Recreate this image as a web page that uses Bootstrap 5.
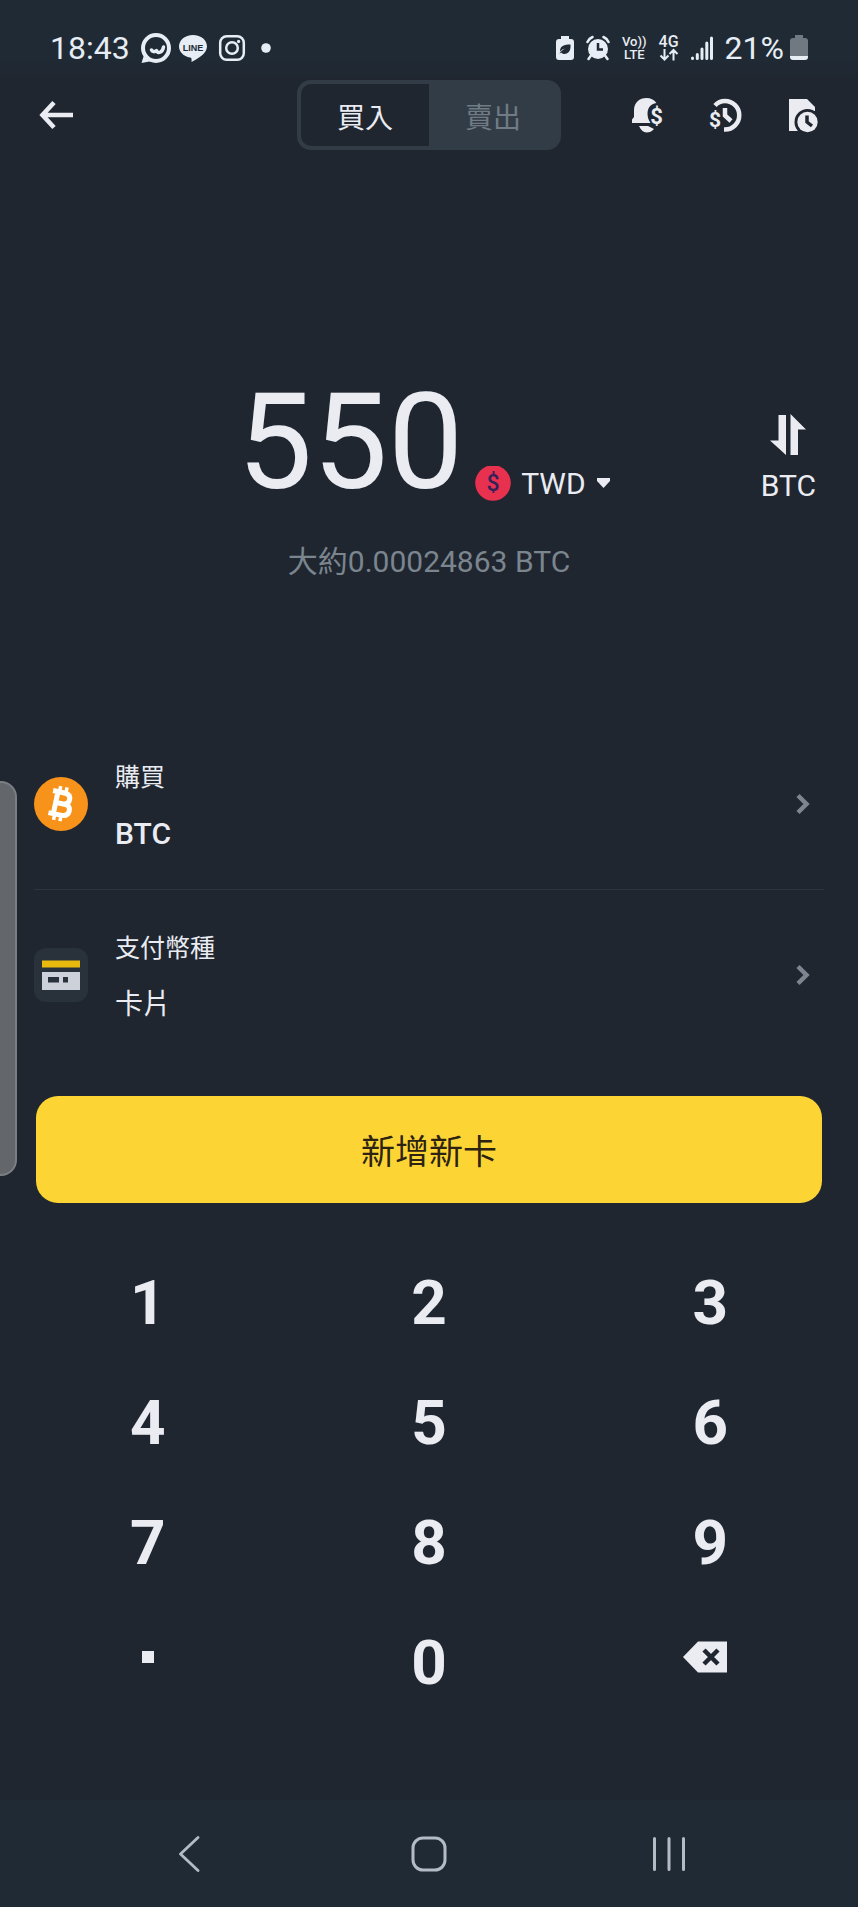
<!DOCTYPE html>
<html lang="zh-Hant">
<head>
<meta charset="utf-8">
<meta name="viewport" content="width=device-width, initial-scale=1">
<title>買入 BTC</title>
<link href="https://cdn.jsdelivr.net/npm/bootstrap@5.3.0/dist/css/bootstrap.min.css" rel="stylesheet">
<style>
  :root { --ink: #eaecf2; --page: #1f2630; --bar: #202a34; --raised: #323c47; --dim: #7b858e; }
  body { background: var(--page); color: var(--ink); font-family: Roboto, "Noto Sans CJK TC", sans-serif; }
  svg { display: block; flex: none; }
  button { color: inherit; background: none; border: 0; padding: 0; }
  .status-bar { background: linear-gradient(var(--bar) 60px, var(--page)); height: 80px; padding: 28px 50px 0; }
  .status-text { font-size: 32px; line-height: 40px; color: #e6edf4; }
  .gap-status { gap: 12px; }
  .gap-tight { gap: 6px; }
  .net-label { font-size: 13px; line-height: 13px; font-weight: 500; }
  .net-label-lg { font-size: 16px; line-height: 13px; font-weight: 500; }
  .split-grid { display: grid; grid-template-columns: 1fr auto 1fr; }
  .top-bar { padding: 0 38px; }
  .top-icons { gap: 44px; }
  .trade-toggle { background: var(--raised); border-radius: 14px; padding: 4px; }
  .trade-toggle button { width: 128px; height: 62px; padding-top: 8px; font-size: 28px; line-height: 40px; color: #717b85; }
  .trade-toggle .chosen { background: var(--page); color: var(--ink); border-radius: 10px 0 0 10px; }
  .amount-area { padding: 226px 32px 0; }
  .amount { font-size: 134px; line-height: 134px; }
  .unit { font-size: 30px; line-height: 36px; gap: 10px; }
  .amount-group { padding-right: 10px; }
  .currency { padding: 90px 0 0 12px; }
  .swap { padding-top: 38px; padding-right: 10px; gap: 12px; }
  .approx { font-size: 30px; line-height: 40px; color: var(--dim); margin-top: 32px; }
  .choices { padding: 136px 34px 0; }
  .choice { height: 171px; gap: 27px; text-align: left; padding-right: 14px !important; }
  .choice + .choice { border-top: 1px solid #2d3640; }
  .choice-title { font-size: 25px; line-height: 40px; padding-top: 4px; }
  .choice-value { font-size: 28px; line-height: 40px; margin-top: 16px; }
  .coin-name { font-size: 30px; font-weight: 500; }
  .cta-wrap { padding: 36px 36px 0; }
  .cta { background: #fcd535; color: #2c2313; height: 107px; padding-top: 6px; border-radius: 22px; font-size: 34px; }
  .keypad { display: grid; grid-template-columns: repeat(3, 1fr); grid-auto-rows: 120px; padding: 40px 7px 74px; }
  .keypad button { display: flex; align-items: center; justify-content: center; font-size: 62px; line-height: 62px; font-weight: 700; }
  .keypad .symbol-key { padding-bottom: 12px; }
  .dot { width: 12px; height: 12px; background: var(--ink); }
  .sys-nav { background: var(--bar); height: 107px; padding: 0 8%; display: grid; grid-template-columns: repeat(3, 1fr); }
  .sys-nav button { display: flex; align-items: center; justify-content: center; color: #b3bcc5; }
  .edge-handle { position: absolute; left: 0; top: 781px; width: 17px; height: 395px; background: #63676b; border: 2px solid #7b7f84; border-left: 0; border-radius: 0 16px 16px 0; }
</style>
</head>
<body>
<div class="position-relative d-flex flex-column min-vh-100">

  <div class="status-bar d-flex justify-content-between align-items-start">
    <div class="d-flex align-items-center gap-tight">
      <span class="status-text">18:43</span>
      <svg class="ms-1" width="32" height="32" viewBox="0 0 32 32" fill="none" stroke="#e6edf4"><path d="M5 20 1.500 31 12 29" fill="#e6edf4" stroke="none"/><circle cx="16" cy="16" r="13" stroke-width="4"/><path d="M11.500 18q2 3 5 .500 1 3 4 1.500 2.500-1.500 3-5" stroke-width="3.500" stroke-linecap="round" stroke-linejoin="round"/></svg>
      <svg width="30" height="30" viewBox="0 0 30 30"><path d="M15 2C7 2 1 7 1 13.500c0 5.500 4.500 9.700 11 11 1.500.3 1.800 1 1.500 4.500 6-3 15.500-8.500 15.500-15.500C29 7 23 2 15 2Z" fill="#e6edf4"/><text x="15" y="17.500" text-anchor="middle" font-family="Liberation Sans, sans-serif" font-weight="700" font-size="9" fill="#202a34">LINE</text></svg>
      <svg class="ms-1" width="28" height="28" viewBox="0 0 28 28" fill="none" stroke="#e6edf4" stroke-width="2.500"><rect x="2.200" y="2.200" width="23.600" height="23.600" rx="6.500"/><circle cx="14" cy="14" r="5.800"/><circle cx="20.600" cy="7.400" r="1.600" fill="#e6edf4" stroke="none"/></svg>
      <svg class="ms-2" width="12" height="12" viewBox="0 0 12 12"><circle cx="6" cy="6" r="4.800" fill="#e6edf4"/></svg>
    </div>
    <div class="d-flex align-items-center gap-status">
      <svg width="18" height="26" viewBox="0 0 18 26"><path d="M5 1h8v3h2q3 0 3 3v15q0 3-3 3H3q-3 0-3-3V7q0-3 3-3h2Z" fill="#e6edf4"/><path d="M14.500 9.500c.5 6-2 9.500-6 9.500-1.500 0-2.800-.7-3.500-1.500L3.500 19q.5-3 6-5.500Q6 14 4 16.500C4 11 8 9.500 14.500 9.500Z" fill="#202a34"/></svg>
      <svg width="24" height="26" viewBox="0 0 24 26"><circle cx="12" cy="14" r="10" fill="#e6edf4"/><path d="M1.500 7Q3 3.500 6.500 2M22.500 7Q21 3.500 17.500 2M5 20.500 2.500 24M19 20.500l2.500 3.500" stroke="#e6edf4" stroke-width="2.500" fill="none" stroke-linecap="round"/><path d="M12 8v6.500h5" stroke="#202a34" stroke-width="2.500" fill="none"/></svg>
      <div class="net-label text-center">Vo))<br>LTE</div>
      <div class="net-label-lg text-center">4G
        <svg width="20" height="13" viewBox="0 0 20 13" fill="none" stroke="#e6edf4" stroke-width="2"><path d="M5.500 1v10.500M1.500 7.500l4 4 4-4M14.500 12.500V2M10.500 6l4-4 4 4"/></svg>
      </div>
      <svg width="22" height="26" viewBox="0 0 22 26" stroke="#e6edf4" stroke-width="3" stroke-linecap="round"><path d="M1.500 23.500v-.5M6.300 23.500v-4M11 23.500V14M15.800 23.500V8M20.500 23.500V3"/></svg>
      <div class="d-flex align-items-center gap-tight">
        <span class="status-text">21%</span>
        <svg width="18" height="26" viewBox="0 0 18 26"><path d="M5 0h8v3h2q3 0 3 3v15H0V6q0-3 3-3h2Z" fill="#707981"/><path d="M0 21h18v1q0 3-3 3H3q-3 0-3-3Z" fill="#e6edf4"/></svg>
      </div>
    </div>
  </div>

  <header class="top-bar split-grid align-items-center">
    <button type="button" aria-label="返回" class="me-auto">
      <svg width="36" height="30" viewBox="0 0 36 30" fill="none" stroke="#eaecf2" stroke-width="4.600"><path d="M35 15H5M16 2.500 4.500 15 16 27.500"/></svg>
    </button>
    <div class="trade-toggle d-flex" role="group" aria-label="交易方向">
      <button type="button" class="chosen" aria-pressed="true">買入</button>
      <button type="button" aria-pressed="false">賣出</button>
    </div>
    <div class="top-icons d-flex justify-content-end">
      <button type="button" aria-label="價格提醒">
        <svg width="34" height="36" viewBox="0 0 34 36" fill="#eaecf2"><path d="M2 26v-3.500L4 20v-7C4 5.500 9.500 1 16.500 1c4 0 7.500 1.500 10 5-6 1-9 5-9 10.500 0 3.500 1 6.500 3 9.500ZM9 29h9l6 3q-3 3.500-7.500 3.500T9 29Z"/><text x="26.500" y="27" text-anchor="middle" font-family="Roboto, sans-serif" font-weight="700" font-size="22">$</text></svg>
      </button>
      <button type="button" aria-label="交易紀錄">
        <svg width="34" height="36" viewBox="0 0 34 36" fill="#eaecf2"><path d="M7 8.500Q11 4 17 4a14 14 0 0 1 0 28.500h-1" fill="none" stroke="#eaecf2" stroke-width="4.500"/><path d="M17 11v7.500l6 5.500" fill="none" stroke="#eaecf2" stroke-width="4.500"/><text x="7" y="30" text-anchor="middle" font-family="Roboto, sans-serif" font-weight="700" font-size="21">$</text></svg>
      </button>
      <button type="button" aria-label="訂單">
        <svg width="34" height="36" viewBox="0 0 34 36"><path d="M3 2h18l8 8v4H3Zm0 11h15c-8 3-11 13-6 21H3Z" fill="#eaecf2"/><circle cx="21.500" cy="25" r="13" fill="#1f2630"/><circle cx="21.500" cy="25" r="10.200" fill="#eaecf2"/><path d="M21 18.500V25l5 4" fill="none" stroke="#1f2630" stroke-width="3.500"/></svg>
      </button>
    </div>
  </header>

  <main>
    <section class="amount-area">
      <div class="split-grid align-items-start">
        <span></span>
        <div class="amount-group d-flex align-items-start">
          <span class="amount">550</span>
          <button type="button" class="currency unit d-flex align-items-center">
            <svg width="36" height="36" viewBox="0 0 36 36"><circle cx="18" cy="17" r="17.800" fill="#e8304f"/><text x="18" y="25" text-anchor="middle" font-family="Roboto, sans-serif" font-weight="500" font-size="23" fill="#33215a">$</text></svg>
            TWD
            <svg width="15" height="12" viewBox="0 0 15 12"><path d="M1 0h13v3L7.500 10 1 3Z" fill="#eaecf2"/></svg>
          </button>
        </div>
        <button type="button" class="swap unit d-flex flex-column align-items-center ms-auto">
          <svg width="38" height="42" viewBox="0 0 38 42" fill="#eaecf2"><path d="M9.500 1H17v40L1 26.500h8.500ZM21.500 41V0L37 15.500h-8V41Z"/></svg>
          BTC
        </button>
      </div>
      <div class="approx text-center">大約0.00024863 BTC</div>
    </section>

    <section class="choices">
      <button type="button" class="choice d-flex align-items-center w-100">
        <svg width="54" height="54" viewBox="0 0 54 54"><circle cx="27" cy="27" r="27" fill="#f7931a"/><g transform="rotate(12 27 27)" fill="none" stroke="#fff" stroke-width="5"><path d="M16.500 15.500H28q6.500 0 6.500 5.500T28 26.500h-7.500M16.500 38H29q7.500 0 7.500-6T29 26.500M21.500 15.500V38"/><path d="M23 9.500v6M29.500 9.500v6M23 38v6M29.500 38v6" stroke-width="3.500"/></g></svg>
        <span class="flex-grow-1">
          <span class="choice-title d-block">購買</span>
          <span class="choice-value coin-name d-block">BTC</span>
        </span>
        <svg width="14" height="22" viewBox="0 0 14 22" fill="none" stroke="#7f8590" stroke-width="4.500"><path d="m2 2.500 8.500 8.500L2 19.500"/></svg>
      </button>
      <button type="button" class="choice d-flex align-items-center w-100">
        <svg width="54" height="54" viewBox="0 0 54 54"><rect width="54" height="54" rx="12" fill="#29313b"/><path d="M8 12.500h38v7H8Z" fill="#e9b90e"/><path d="M8 24h38v18H8Z" fill="#cdd1da"/><path d="M14 29h11v5.500H14ZM29 29h5v5.500h-5Z" fill="#29313b"/></svg>
        <span class="flex-grow-1">
          <span class="choice-title d-block">支付幣種</span>
          <span class="choice-value d-block">卡片</span>
        </span>
        <svg width="14" height="22" viewBox="0 0 14 22" fill="none" stroke="#7f8590" stroke-width="4.500"><path d="m2 2.500 8.500 8.500L2 19.500"/></svg>
      </button>
    </section>

    <div class="cta-wrap">
      <button type="button" class="cta w-100">新增新卡</button>
    </div>

    <div class="keypad">
      <button type="button">1</button>
      <button type="button">2</button>
      <button type="button">3</button>
      <button type="button">4</button>
      <button type="button">5</button>
      <button type="button">6</button>
      <button type="button">7</button>
      <button type="button">8</button>
      <button type="button">9</button>
      <button type="button" class="symbol-key" aria-label="小數點"><span class="dot"></span></button>
      <button type="button">0</button>
      <button type="button" class="symbol-key" aria-label="刪除">
        <svg width="54" height="32" viewBox="0 0 54 32"><path d="M0 16 15 .5h29v31H15Z" fill="#eaecf2"/><path d="m21 9 14 14M35 9 21 23" stroke="#1f2630" stroke-width="4.500"/></svg>
      </button>
    </div>
  </main>

  <nav class="sys-nav mt-auto" aria-label="系統導覽">
    <button type="button" aria-label="上一頁"><svg width="22" height="36" viewBox="0 0 22 36" fill="none" stroke="currentColor" stroke-width="2.800" stroke-linecap="round" stroke-linejoin="round"><path d="M20 1.500 2.500 18 20 34.500"/></svg></button>
    <button type="button" aria-label="主畫面"><svg width="36" height="36" viewBox="0 0 36 36" fill="none" stroke="currentColor" stroke-width="3"><rect x="2" y="2" width="32" height="32" rx="10"/></svg></button>
    <button type="button" aria-label="最近使用"><svg width="34" height="36" viewBox="0 0 34 36" stroke="currentColor" stroke-width="3" stroke-linecap="round"><path d="M2.500 2.500v31M17 2.500v31M31.500 2.500v31"/></svg></button>
  </nav>

  <div class="edge-handle"></div>
</div>
<script src="https://cdn.jsdelivr.net/npm/bootstrap@5.3.0/dist/js/bootstrap.bundle.min.js"></script>
</body>
</html>
